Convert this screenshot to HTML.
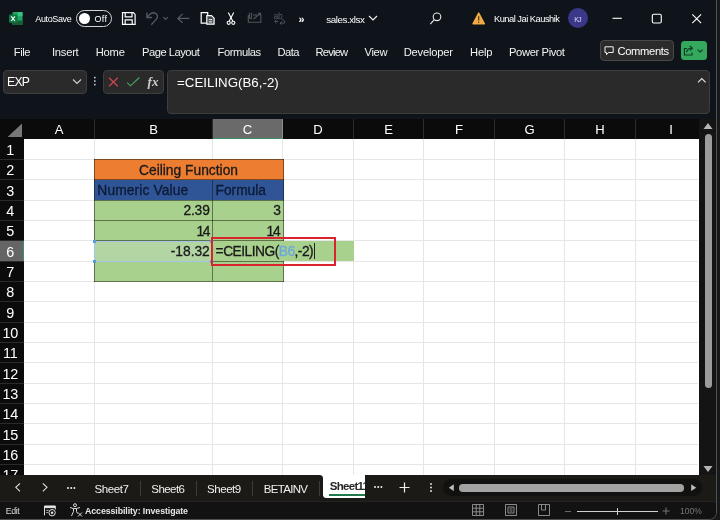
<!DOCTYPE html>
<html><head><meta charset="utf-8">
<style>
*{box-sizing:border-box;margin:0;padding:0}
html,body{width:720px;height:520px;overflow:hidden;background:#0e141a;font-family:"Liberation Sans",sans-serif;color:#fff}
.abs{position:absolute}
#top{position:absolute;left:-10px;top:-10px;width:727.2px;height:530.2px;background:#0e141a;border:1px solid #4d5256;border-bottom:1.8px solid #505050;border-radius:0 8px 8px 0}
#edge{position:absolute;left:0;top:0;width:720px;height:520px;background:#16181a}
.t{position:absolute;white-space:nowrap;color:#fff}
.menu{font-size:11.5px;top:45px;color:#f2f2f2}
.box{position:absolute;background:#2a2a2a;border:1px solid #3d3d3d;border-radius:4px}
#grid{position:absolute;left:0;top:119px;width:699px;height:356px;background:#fff;overflow:hidden}
.ch{position:absolute;top:0;height:20px;background:#0b0b0b;color:#fff;font-size:13.1px;text-align:center;line-height:21.8px;border-right:1px solid #2c2c2c}
.rh{position:absolute;left:0;width:20.5px;background:#0b0b0b;color:#fff;font-size:14.4px;text-align:center;letter-spacing:-.2px}
.rl{position:absolute;left:0;width:24px;height:1px;background:#2a2a2a;z-index:2}
.vl{position:absolute;top:20px;width:1px;height:340px;background:#e6e6e6}
.hl{position:absolute;left:24px;height:1px;width:674px;background:#e6e6e6}
.t.c{-webkit-text-stroke:.3px currentColor}
.cell{position:absolute;font-size:14.5px;color:#111;white-space:nowrap;line-height:20px}
.tab{font-size:11.500px;color:#f0f0f0}
</style></head><body><div id="wrap" style="position:absolute;left:0;top:0;width:720px;height:520px;will-change:transform">
<div id="edge"></div>
<div id="top"></div>

<!-- title bar -->
<div class="abs" style="left:75.800px;top:10px;width:36.200px;height:17px;border:1px solid #d5d5d5;border-radius:9px"></div>
<div class="abs" style="left:79px;top:12.800px;width:11.400px;height:11.400px;border-radius:6px;background:#fff"></div>
<div class="abs" style="left:567.800px;top:8.200px;width:20px;height:20px;border-radius:50%;background:#3c3889"></div>
<div class="box" style="left:600px;top:40px;width:74px;height:21px;background:#2b2b2b;border-color:#484848"></div>
<div class="abs" style="left:680.500px;top:40.700px;width:26px;height:19.500px;border-radius:3.500px;background:#34a85c"></div>
<div class="box" style="left:3px;top:70px;width:84px;height:24px"></div>
<div class="box" style="left:103px;top:70px;width:61px;height:24px"></div>
<div class="box" style="left:167px;top:70px;width:542.500px;height:44px"></div>
<svg class="abs" style="left:0;top:0" width="720" height="119" viewBox="0 0 720 119" fill="none">
<!-- excel logo -->
<g>
<rect x="12.500" y="12" width="10" height="13" rx="1" fill="#21a366"/>
<rect x="17.500" y="12" width="5" height="4.300" fill="#33c481"/>
<rect x="12.500" y="16.300" width="5" height="4.300" fill="#107c41"/>
<rect x="12.500" y="20.600" width="10" height="4.400" fill="#185c37"/>
<rect x="9" y="14.500" width="8.200" height="8.200" rx=".8" fill="#0f7a40"/>
<path d="M11.300 16.300l3.600 4.700M14.900 16.300l-3.600 4.700" stroke="#fff" stroke-width="1.100"/>
</g>
<!-- save -->
<g stroke="#fff" stroke-width="1.200">
<path d="M122.500 12.600h10.800l1.800 1.800v10h-12.600z"/><path d="M125.200 12.600v4.200h6.800v-4.200"/><path d="M125.200 24.400v-4.600h7v4.600"/>
</g>
<!-- undo -->
<g stroke="#565c61" stroke-width="1.300">
<path d="M146.900 12.500v5h5"/><path d="M147.300 17.200c2.500-3.600 5.800-5.400 8.600-3.600c2.600 1.900 1.800 4.400-.6 6.800l-4 4.400"/>
<path d="M163.300 17.100l2.300 2.300l2.300-2.300" stroke-width="1.100"/>
<path d="M189.400 18.400h-11.600"/><path d="M182.600 13.900l-4.700 4.500l4.700 4.500"/>
</g>
<!-- paste/copy -->
<g stroke="#fff" stroke-width="1.200">
<path d="M206.500 23.200h-5.300v-10.600h6.500v2.500"/>
<path d="M206.800 15.600h4.700l2.600 2.600v6h-7.300z" fill="#e8e8e8" fill-opacity=".25"/>
<path d="M208.700 19.700h3.600M208.700 21.900h3.600" stroke-width="1"/>
</g>
<!-- cut -->
<g stroke="#fff" stroke-width="1.100">
<path d="M228.300 12.600l4.400 8.300"/><path d="M233.700 12.600l-4.400 8.300"/><circle cx="228.700" cy="22.800" r="1.600"/><circle cx="233.300" cy="22.800" r="1.600"/>
</g>
<!-- mail -->
<g stroke="#4f555a" stroke-width="1.100">
<path d="M248.300 15v7.300h12.600v-7.300"/><path d="M249.500 12.700v5M251.500 12.700v5M249.500 17.700c0 1.200 2 1.200 2 0"/><path d="M253 15h4"/><path d="M253.500 19l6.800-5.500M257.800 13.200h2.700v2.600"/>
</g>
<!-- translate -->
<g stroke="#4f555a" stroke-width="1">
<path d="M282 19.500c2.200.3 3.300 1.700 2.300 3.600h-4M281.700 21.500l-1.600 1.600l1.600 1.600"/>
<path d="M276.500 19.600l-1.800 1.800l1.800 1.800M274.800 21.400h3.600"/>
</g>
<text x="273.500" y="19" font-size="8.500" fill="#565c61" font-family="Liberation Sans, sans-serif" letter-spacing="-.3">ab</text>
<!-- chevron after filename -->
<path d="M369 16l4 4l4-4" stroke="#f0f0f0" stroke-width="1.200"/>
<!-- search -->
<circle cx="437" cy="16.800" r="3.800" stroke="#e8e8e8" stroke-width="1.100"/><path d="M434.300 19.600l-4 4.600" stroke="#e8e8e8" stroke-width="1.100"/>
<!-- warning -->
<path d="M478.700 13l5.700 10.800h-11.400z" fill="#f2aa45" stroke="#f2aa45" stroke-width="1.400" stroke-linejoin="round"/>
<path d="M478.700 16.200v4.300" stroke="#4a3210" stroke-width="1.200"/><circle cx="478.700" cy="22.300" r=".7" fill="#4a3210"/>
<!-- window controls -->
<path d="M612.500 18.300h9.300" stroke="#fff" stroke-width="1.100"/>
<rect x="652.300" y="14.300" width="9" height="8.700" rx="1.500" stroke="#fff" stroke-width="1.100"/>
<path d="M692.300 14.300l8.800 8.800M701.100 14.300l-8.800 8.800" stroke="#fff" stroke-width="1.100"/>
<!-- comments icon -->
<path d="M605 46.800h8.200v5.700h-4.700l-2 2.200v-2.200h-1.500z" stroke="#f0f0f0" stroke-width="1"/>
<!-- share icon -->
<g stroke="#0e3a20" stroke-width="1.100">
<path d="M687 48.500h-2.600v6.500h7.600v-2.600"/><path d="M686.600 52.300c.4-2.700 2-4 5-4"/><path d="M689.800 46l2.600 2.300l-2.600 2.300"/>
<path d="M697.700 49.700l2.500 2.400l2.500-2.400"/>
</g>
<!-- name box chevron -->
<path d="M73 79.500l4 4l4-4" stroke="#d0d0d0" stroke-width="1.100"/>
<!-- dots -->
<g fill="#c8c8c8"><rect x="94" y="76.800" width="1.600" height="1.600"/><rect x="94" y="80.300" width="1.600" height="1.600"/><rect x="94" y="83.800" width="1.600" height="1.600"/></g>
<!-- x and check -->
<path d="M109 77.800l8.800 8.500M117.800 77.800l-8.800 8.500" stroke="#cf4650" stroke-width="1.200"/>
<path d="M127.200 82.600l3.200 3.200l9-8.300" stroke="#46a866" stroke-width="1.100"/>
<!-- collapse chevron -->
<path d="M698 82.300l3.800-3.800l3.800 3.800" stroke="#e0e0e0" stroke-width="1.200"/>
</svg>
<div class="t" style="left:35.25px;top:14.88px;font-size:9px;line-height:9px;letter-spacing:-0.359px;color:#fff;">AutoSave</div>
<div class="t" style="left:94.50px;top:14.88px;font-size:9px;line-height:9px;letter-spacing:0.310px;color:#fff;">Off</div>
<div class="t" style="left:298.50px;top:13.96px;font-size:10.8px;line-height:10.8px;letter-spacing:0.000px;color:#fff;font-weight:bold;">»</div>
<div class="t" style="left:326.25px;top:14.70px;font-size:9.8px;line-height:9.8px;letter-spacing:-0.415px;color:#fff;">sales.xlsx</div>
<div class="t" style="left:494.00px;top:15.13px;font-size:9.3px;line-height:9.3px;letter-spacing:-0.499px;color:#fff;">Kunal Jai Kaushik</div>
<div class="t" style="left:574.30px;top:15.61px;font-size:7.2px;line-height:7.2px;letter-spacing:-1.188px;color:#dcdcf5;">KJ</div>
<div class="t" style="left:13.75px;top:46.52px;font-size:11.2px;line-height:11.2px;letter-spacing:-0.427px;color:#f2f2f2;">File</div>
<div class="t" style="left:52.00px;top:46.52px;font-size:11.2px;line-height:11.2px;letter-spacing:-0.250px;color:#f2f2f2;">Insert</div>
<div class="t" style="left:95.75px;top:46.52px;font-size:11.2px;line-height:11.2px;letter-spacing:-0.218px;color:#f2f2f2;">Home</div>
<div class="t" style="left:142.00px;top:46.52px;font-size:11.2px;line-height:11.2px;letter-spacing:-0.489px;color:#f2f2f2;">Page Layout</div>
<div class="t" style="left:217.50px;top:46.52px;font-size:11.2px;line-height:11.2px;letter-spacing:-0.422px;color:#f2f2f2;">Formulas</div>
<div class="t" style="left:277.50px;top:46.52px;font-size:11.2px;line-height:11.2px;letter-spacing:-0.563px;color:#f2f2f2;">Data</div>
<div class="t" style="left:315.50px;top:46.52px;font-size:11.2px;line-height:11.2px;letter-spacing:-0.797px;color:#f2f2f2;">Review</div>
<div class="t" style="left:364.50px;top:46.52px;font-size:11.2px;line-height:11.2px;letter-spacing:-0.360px;color:#f2f2f2;">View</div>
<div class="t" style="left:403.75px;top:46.52px;font-size:11.2px;line-height:11.2px;letter-spacing:-0.228px;color:#f2f2f2;">Developer</div>
<div class="t" style="left:470.00px;top:46.52px;font-size:11.2px;line-height:11.2px;letter-spacing:-0.172px;color:#f2f2f2;">Help</div>
<div class="t" style="left:509.00px;top:46.52px;font-size:11.2px;line-height:11.2px;letter-spacing:-0.375px;color:#f2f2f2;">Power Pivot</div>
<div class="t" style="left:617.50px;top:46.02px;font-size:11.2px;line-height:11.2px;letter-spacing:-0.343px;color:#fff;">Comments</div>
<div class="t" style="left:7.00px;top:76.42px;font-size:12.2px;line-height:12.2px;letter-spacing:-0.700px;color:#fff;">EXP</div>
<div class="t" style="left:147.50px;top:74.90px;font-size:13px;line-height:13px;letter-spacing:0.145px;color:#cfcfcf;font-weight:bold;font-family:'Liberation Serif',serif;font-style:italic;">fx</div>
<div class="t" style="left:177.00px;top:76.24px;font-size:13.3px;line-height:13.3px;letter-spacing:0.010px;color:#fff;">=CEILING(B6,-2)</div>
<!-- grid -->
<div id="grid">
<div class="abs" style="left:0;top:0;width:698px;height:20px;background:#0b0b0b"></div>
<div class="abs" style="left:0;top:0;width:24px;height:356px;background:#0b0b0b"></div>
<svg class="abs" style="left:6.500px;top:3.500px" width="15.500" height="14.500" viewBox="0 0 16 16" preserveAspectRatio="none"><path d="M16 0v16H0z" fill="#777"/></svg>
<div class="ch" style="left:24px;width:71px;">A</div>
<div class="ch" style="left:95px;width:118px;">B</div>
<div class="ch" style="left:213px;width:70px;background:#6a6a6a;border-bottom:1.5px solid #3f8f66;border-right-color:#8c8c8c;">C</div>
<div class="ch" style="left:283px;width:71px;">D</div>
<div class="ch" style="left:354px;width:70px;">E</div>
<div class="ch" style="left:424px;width:71px;">F</div>
<div class="ch" style="left:495px;width:70px;">G</div>
<div class="ch" style="left:565px;width:71px;">H</div>
<div class="ch" style="left:636px;width:71px;">I</div>
<div class="vl" style="left:94px"></div>
<div class="vl" style="left:212px"></div>
<div class="vl" style="left:282px"></div>
<div class="vl" style="left:353px"></div>
<div class="vl" style="left:423px"></div>
<div class="vl" style="left:494px"></div>
<div class="vl" style="left:564px"></div>
<div class="vl" style="left:635px"></div>
<div class="hl" style="top:39.9px"></div>
<div class="hl" style="top:60.3px"></div>
<div class="hl" style="top:80.6px"></div>
<div class="hl" style="top:100.9px"></div>
<div class="hl" style="top:121.2px"></div>
<div class="hl" style="top:141.6px"></div>
<div class="hl" style="top:161.9px"></div>
<div class="hl" style="top:182.2px"></div>
<div class="hl" style="top:202.6px"></div>
<div class="hl" style="top:222.9px"></div>
<div class="hl" style="top:243.2px"></div>
<div class="hl" style="top:263.6px"></div>
<div class="hl" style="top:283.9px"></div>
<div class="hl" style="top:304.2px"></div>
<div class="hl" style="top:324.6px"></div>
<div class="hl" style="top:344.9px"></div>
<div class="hl" style="top:365.2px"></div>
<div class="rh" style="top:20.1px;height:20.33px;line-height:23.229999999999997px;">1</div>
<div class="rl" style="top:39.9px"></div>
<div class="rh" style="top:40.43px;height:20.33px;line-height:23.229999999999997px;">2</div>
<div class="rl" style="top:60.3px"></div>
<div class="rh" style="top:60.76px;height:20.33px;line-height:23.229999999999997px;">3</div>
<div class="rl" style="top:80.6px"></div>
<div class="rh" style="top:81.09px;height:20.33px;line-height:23.229999999999997px;">4</div>
<div class="rl" style="top:100.9px"></div>
<div class="rh" style="top:101.42px;height:20.33px;line-height:23.229999999999997px;">5</div>
<div class="rl" style="top:121.2px"></div>
<div class="abs" style="left:0;top:121.25px;width:24px;height:20.83px;background:#656565;border-right:1px solid #3f8f66"></div>
<div class="rh" style="top:121.75px;height:20.33px;line-height:23.229999999999997px;background:transparent;">6</div>
<div class="rl" style="top:141.6px"></div>
<div class="rh" style="top:142.08px;height:20.33px;line-height:23.229999999999997px;">7</div>
<div class="rl" style="top:161.9px"></div>
<div class="rh" style="top:162.41px;height:20.33px;line-height:23.229999999999997px;">8</div>
<div class="rl" style="top:182.2px"></div>
<div class="rh" style="top:182.74px;height:20.33px;line-height:23.229999999999997px;">9</div>
<div class="rl" style="top:202.6px"></div>
<div class="rh" style="top:203.07px;height:20.33px;line-height:23.229999999999997px;">10</div>
<div class="rl" style="top:222.9px"></div>
<div class="rh" style="top:223.4px;height:20.33px;line-height:23.229999999999997px;">11</div>
<div class="rl" style="top:243.2px"></div>
<div class="rh" style="top:243.73px;height:20.33px;line-height:23.229999999999997px;">12</div>
<div class="rl" style="top:263.6px"></div>
<div class="rh" style="top:264.06px;height:20.33px;line-height:23.229999999999997px;">13</div>
<div class="rl" style="top:283.9px"></div>
<div class="rh" style="top:284.39px;height:20.33px;line-height:23.229999999999997px;">14</div>
<div class="rl" style="top:304.2px"></div>
<div class="rh" style="top:304.72px;height:20.33px;line-height:23.229999999999997px;">15</div>
<div class="rl" style="top:324.6px"></div>
<div class="rh" style="top:325.05px;height:20.33px;line-height:23.229999999999997px;">16</div>
<div class="rl" style="top:344.9px"></div>
<div class="rh" style="top:345.38px;height:20.33px;line-height:23.229999999999997px;">17</div>
<div class="rl" style="top:365.2px"></div>
<div class="abs" style="left:94px;top:40px;width:189.5px;height:21px;background:#ed7d31"></div>
<div class="abs" style="left:94px;top:60.7px;width:189.5px;height:20.5px;background:#2f5597"></div>
<div class="abs" style="left:94px;top:81px;width:189.5px;height:81.5px;background:#a9d18e"></div>
<div class="abs" style="left:94px;top:39.9px;width:189.5px;height:1px;background:rgba(20,20,10,.5)"></div>
<div class="abs" style="left:94px;top:60.3px;width:189.5px;height:1px;background:rgba(20,20,10,.5)"></div>
<div class="abs" style="left:94px;top:80.8px;width:189.5px;height:1px;background:rgba(20,20,10,.5)"></div>
<div class="abs" style="left:94px;top:101.3px;width:189.5px;height:1px;background:rgba(20,20,10,.5)"></div>
<div class="abs" style="left:94px;top:121.4px;width:189.5px;height:1px;background:rgba(20,20,10,.5)"></div>
<div class="abs" style="left:94px;top:141.9px;width:189.5px;height:1px;background:rgba(20,20,10,.5)"></div>
<div class="abs" style="left:94px;top:162.0px;width:189.5px;height:1px;background:rgba(20,20,10,.5)"></div>
<div class="abs" style="left:93.8px;top:40px;width:1px;height:123px;background:rgba(20,20,10,.5)"></div>
<div class="abs" style="left:282.8px;top:40px;width:1px;height:123px;background:rgba(20,20,10,.5)"></div>
<div class="abs" style="left:211.5px;top:61px;width:1px;height:101px;background:rgba(20,20,10,.5)"></div>
<div class="abs" style="left:94px;top:121.5px;width:118px;height:21px;background:#b3d5a4;border:1px solid #9fc5e8"></div>
<div class="abs" style="left:93px;top:121px;width:3px;height:3px;background:#5b9bd5"></div>
<div class="abs" style="left:93px;top:140.5px;width:3px;height:3px;background:#5b9bd5"></div>
<div class="abs" style="left:210px;top:121px;width:3px;height:3px;background:#5b9bd5"></div>
<div class="abs" style="left:210px;top:140.5px;width:3px;height:3px;background:#5b9bd5"></div>
<div class="abs" style="left:212.5px;top:122.3px;width:141px;height:19.4px;background:#a9d18e"></div>
<div class="abs" style="left:211px;top:118px;width:125px;height:29px;border:2px solid #d9232e"></div>
<div class="t c" style="left:139.00px;top:44.82px;font-size:13.8px;line-height:13.8px;letter-spacing:0.004px;color:#1a1a1a;">Ceiling Function</div>
<div class="t c" style="left:97.30px;top:65.02px;font-size:13.8px;line-height:13.8px;letter-spacing:0.126px;color:#0d1a33;">Numeric Value</div>
<div class="t c" style="left:215.60px;top:65.02px;font-size:13.8px;line-height:13.8px;letter-spacing:-0.041px;color:#0d1a33;">Formula</div>
<div class="t c" style="left:183.40px;top:85.42px;font-size:13.8px;line-height:13.8px;letter-spacing:-0.147px;color:#1a1a1a;">2.39</div>
<div class="t c" style="left:273.30px;top:85.42px;font-size:13.8px;line-height:13.8px;letter-spacing:-0.659px;color:#1a1a1a;">3</div>
<div class="t c" style="left:196.40px;top:105.72px;font-size:13.8px;line-height:13.8px;letter-spacing:-1.200px;color:#1a1a1a;">14</div>
<div class="t c" style="left:266.60px;top:105.72px;font-size:13.8px;line-height:13.8px;letter-spacing:-1.200px;color:#1a1a1a;">14</div>
<div class="t c" style="left:170.80px;top:126.02px;font-size:13.8px;line-height:13.8px;letter-spacing:-0.025px;color:#1a1a1a;">-18.32</div>
<div class="t c" style="left:215.60px;top:126.02px;font-size:13.8px;line-height:13.8px;letter-spacing:-0.524px;color:#1a1a1a;">=CEILING(<span style="color:#6fa8dc">B6</span>,-2)</div>
<div class="abs" style="left:314px;top:124px;width:1px;height:16px;background:#222"></div>
</div>
<div class="abs" style="left:699px;top:119px;width:17.2px;height:356px;background:#141414"></div>
<div class="abs" style="left:704.5px;top:133.5px;width:7px;height:254.5px;border-radius:3.5px;background:#9c9c9c"></div>
<svg class="abs" style="left:703px;top:122px" width="10" height="8" viewBox="0 0 10 8"><path d="M5 1L9.500 7H.5z" fill="#b5b5b5"/></svg>
<svg class="abs" style="left:703px;top:465px" width="10" height="8" viewBox="0 0 10 8"><path d="M5 7L9.500 1H.5z" fill="#b5b5b5"/></svg>
<div class="abs" style="left:0;top:475px;width:716.2px;height:26px;background:#1b1a17"></div>
<div class="abs" style="left:0;top:500.800px;width:716.2px;height:18.100px;background:#121212;border-top:1px solid #232323;border-bottom-right-radius:7px"></div>
<div class="abs" style="left:319px;top:475px;width:46.300px;height:6px;background:#fff"></div>
<div class="abs" style="left:316px;top:475px;width:6.500px;height:8px;background:#1b1a17;border-top-right-radius:3.500px"></div>
<div class="abs" style="left:322.500px;top:475px;width:42.800px;height:22.800px;background:#fff;border-bottom-left-radius:3.500px"></div>
<div class="abs" style="left:329.400px;top:493.800px;width:35.900px;height:2.200px;background:#1f7a4d"></div>
<div class="abs" style="left:322.500px;top:476px;width:42.800px;height:18px;overflow:hidden"><div class="t" style="left:7.25px;top:5.02px;font-size:11.5px;line-height:11.5px;letter-spacing:-0.703px;color:#262626;font-weight:bold;">Sheet11</div></div>
<svg class="abs" style="left:14px;top:482px" width="8" height="11" viewBox="0 0 8 11" fill="none" stroke="#ddd" stroke-width="1.100"><path d="M6 1.300L1.800 5.300l4.200 4"/></svg>
<svg class="abs" style="left:41px;top:482px" width="8" height="11" viewBox="0 0 8 11" fill="none" stroke="#ddd" stroke-width="1.100"><path d="M1.800 1.300L6 5.300l-4.200 4"/></svg>
<div class="abs" style="left:66.7px;top:486.5px;width:2.2px;height:2.2px;border-radius:1.1px;background:#eee;box-shadow:3.200px 0 0 #eee,6.400px 0 0 #eee"></div>
<div class="abs" style="left:374.2px;top:486.3px;width:2.2px;height:2.2px;border-radius:1.1px;background:#eee;box-shadow:3.200px 0 0 #eee,6.400px 0 0 #eee"></div>
<div class="t" style="left:94.50px;top:483.77px;font-size:11.5px;line-height:11.5px;letter-spacing:-0.391px;color:#f0f0f0;">Sheet7</div>
<div class="t" style="left:151.25px;top:483.77px;font-size:11.5px;line-height:11.5px;letter-spacing:-0.541px;color:#f0f0f0;">Sheet6</div>
<div class="t" style="left:207.00px;top:483.77px;font-size:11.5px;line-height:11.5px;letter-spacing:-0.441px;color:#f0f0f0;">Sheet9</div>
<div class="t" style="left:263.75px;top:483.77px;font-size:11.5px;line-height:11.5px;letter-spacing:-0.685px;color:#f0f0f0;">BETAINV</div>
<div class="abs" style="left:139.5px;top:480.5px;width:1px;height:15px;background:#3c3c3a"></div>
<div class="abs" style="left:195.8px;top:480.5px;width:1px;height:15px;background:#3c3c3a"></div>
<div class="abs" style="left:252px;top:480.5px;width:1px;height:15px;background:#3c3c3a"></div>
<div class="abs" style="left:319px;top:480.5px;width:1px;height:15px;background:#3c3c3a"></div>
<svg class="abs" style="left:399px;top:482px" width="11" height="11" viewBox="0 0 11 11" stroke="#eee" stroke-width="1.200"><path d="M5.500 .5v10M.5 5.500h10"/></svg>
<div class="abs" style="left:430px;top:483px;width:2px;height:2px;border-radius:1px;background:#ddd;box-shadow:0 3.500px 0 #ddd,0 7px 0 #ddd"></div>
<div class="abs" style="left:443px;top:479px;width:259px;height:17px;border-radius:8.500px;background:#111110"></div>
<div class="abs" style="left:458.500px;top:484px;width:225px;height:7.500px;border-radius:3.750px;background:#a3a3a3"></div>
<svg class="abs" style="left:448px;top:482px" width="7" height="11" viewBox="0 0 7 11"><path d="M.8 5.700L5.800 2.300v6.800z" fill="#bdbdbd"/></svg>
<svg class="abs" style="left:690px;top:482px" width="7" height="11" viewBox="0 0 7 11"><path d="M6.200 5.700L1.200 2.300v6.800z" fill="#bdbdbd"/></svg>
<div class="t" style="left:5.80px;top:506.85px;font-size:8.8px;line-height:8.8px;letter-spacing:-0.393px;color:#d8d8d8;">Edit</div>
<svg class="abs" style="left:44px;top:505px" width="13" height="12" viewBox="0 0 13 12" fill="none" stroke="#e0e0e0" stroke-width="1"><path d="M.5 10.300v-9.300h10.800v3.500"/><path d="M.5 2h10.800" stroke-width="2.200"/><circle cx="8.100" cy="7.700" r="3.200"/><circle cx="8.100" cy="7.700" r="1.300" fill="#e0e0e0" stroke="none"/><path d="M2.300 5.300h2.200M2.300 7.600h1.600" stroke-width=".9"/></svg>
<svg class="abs" style="left:69px;top:503px" width="14" height="14" viewBox="0 0 14 14" fill="none" stroke="#ddd" stroke-width="1"><circle cx="6" cy="2.200" r="1.500"/><path d="M1 4.500l3.500 1v3l-2 4.500M11 4.500l-3.500 1v3l1 2"/><path d="M4.500 5.500h3"/><path d="M9 9.500l4 4M13 9.500l-4 4"/></svg>
<div class="t" style="left:85.00px;top:506.85px;font-size:8.8px;line-height:8.8px;letter-spacing:-0.086px;color:#e6e6e6;font-weight:bold;">Accessibility: Investigate</div>
<svg class="abs" style="left:472px;top:504px" width="12" height="12" viewBox="0 0 12 12" fill="none" stroke="#8a8a8a" stroke-width="1"><path d="M.5 .5h11v11h-11zM4.200 .5v11M7.800 .5v11M.5 4.200h11M.5 7.800h11"/></svg>
<svg class="abs" style="left:505px;top:504px" width="12" height="12" viewBox="0 0 12 12" fill="none" stroke="#8a8a8a" stroke-width="1"><path d="M.5 .5h11v11h-11z"/><path d="M3 3h6v6h-6z"/><path d="M4.500 5h3M4.500 7h3"/></svg>
<svg class="abs" style="left:538px;top:504px" width="12" height="12" viewBox="0 0 12 12" fill="none" stroke="#8a8a8a" stroke-width="1"><path d="M.5 .5h11v11h-11z"/><path d="M3.500 .5v5.500h4v-5.500"/></svg>
<div class="abs" style="left:565px;top:511px;width:6px;height:1px;background:#666"></div>
<div class="abs" style="left:577px;top:510.500px;width:81px;height:1.500px;background:#d0d0d0"></div>
<div class="abs" style="left:616.500px;top:508px;width:1.500px;height:7px;background:#d0d0d0"></div>
<svg class="abs" style="left:662px;top:507px" width="8" height="8" viewBox="0 0 8 8" stroke="#777" stroke-width="1"><path d="M4 .5v7M.5 4h7"/></svg>
<div class="t" style="left:680px;top:505.500px;font-size:8.500px;color:#777">100%</div>
</div></body></html>
